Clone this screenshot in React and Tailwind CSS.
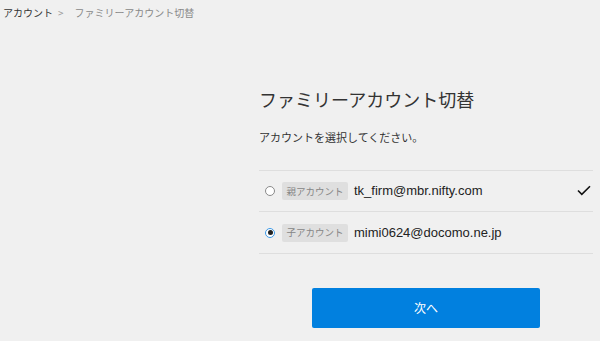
import React from "react";

const jp = { fontFamily: '"Noto Sans CJK JP", "Noto Sans", sans-serif' };
const latin = { fontFamily: '"Liberation Sans", "Noto Sans CJK JP", sans-serif' };

function Radio({ checked }) {
  return checked ? (
    <span className="flex h-[10px] w-[10px] items-center justify-center rounded-full border border-[#3d9ae8] bg-white">
      <span className="h-[5px] w-[5px] rounded-full bg-[#222]" />
    </span>
  ) : (
    <span className="h-[10px] w-[10px] rounded-full border border-[#8a8a8a] bg-white" />
  );
}

function Row({ label, email, checked, current, tall }) {
  return (
    <div
      className={
        tall
          ? "flex h-[42px] items-center border-b border-[#dedede] pl-[6px] pr-[2px]"
          : "flex h-[41px] items-center border-b border-[#dedede] pl-[6px] pr-[2px]"
      }
    >
      <Radio checked={checked} />
      <span
        className="ml-[7px] flex h-[18px] w-[66px] items-center justify-center rounded-[2px] bg-[#dfdfdf] text-[9.5px] text-[#858585]"
        style={jp}
      >
        {label}
      </span>
      <span className="ml-[6px] text-[13px] text-[#222]" style={latin}>
        {email}
      </span>
      <span className="flex-1" />
      {current && (
        <svg width="14" height="11" viewBox="0 0 14 11" className="mb-[2px]">
          <path d="M1 5.5 L4.8 9.3 L13 1.2" fill="none" stroke="#111" strokeWidth="1.6" />
        </svg>
      )}
    </div>
  );
}

export default function App() {
  return (
    <div className="min-h-[341px] w-full bg-[#f0f0f0]" style={jp}>
      <div className="flex h-[24px] items-center pl-[3px] text-[10px]">
        <span className="text-[#333]">アカウント</span>
        <span className="ml-[5px] text-[#999]">&gt;</span>
        <span className="ml-[11px] text-[#888]">ファミリーアカウント切替</span>
      </div>
      <div className="pl-[259px] pr-[7px] pt-[62px]">
        <h1 className="text-[18px] font-normal leading-[26px] text-[#333]">ファミリーアカウント切替</h1>
        <p className="mt-[17px] text-[11px] leading-[16px] text-[#333]">アカウントを選択してください。</p>
        <div className="mt-[25px] border-t border-[#dedede]">
          <Row label="親アカウント" email="tk_firm@mbr.nifty.com" current />
          <Row label="子アカウント" email="mimi0624@docomo.ne.jp" checked tall />
        </div>
        <div className="mt-[34px] flex justify-center">
          <button className="flex h-[40px] w-[228px] items-center justify-center rounded-[2px] bg-[#0180df] text-[12px] text-white">
            次へ
          </button>
        </div>
      </div>
    </div>
  );
}
